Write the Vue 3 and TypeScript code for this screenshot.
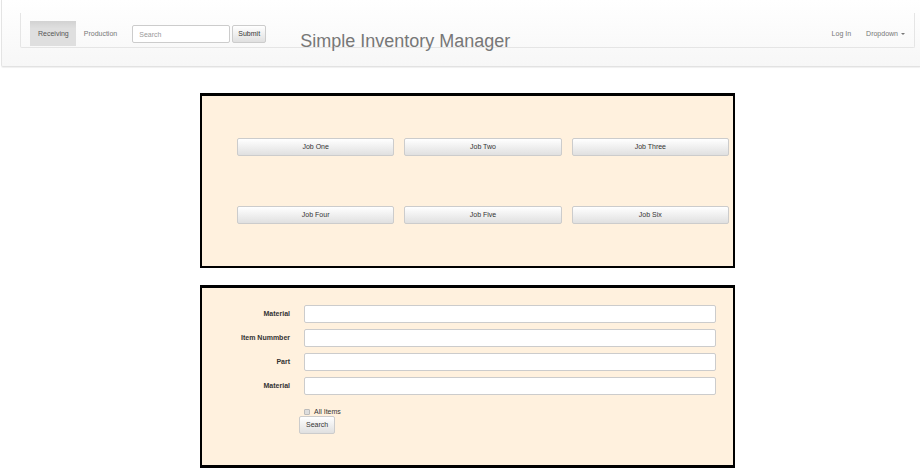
<script setup lang="ts">
import { ref } from 'vue'

interface Field {
  id: string
  label: string
}

const tabs = ['Receiving', 'Production']
const activeTab = ref('Receiving')
const query = ref('')
const allItems = ref(false)

const jobs = ['Job One', 'Job Two', 'Job Three', 'Job Four', 'Job Five', 'Job Six']

const fields: Field[] = [
  { id: 'material', label: 'Material' },
  { id: 'item-number', label: 'Item Nummber' },
  { id: 'part', label: 'Part' },
  { id: 'material-type', label: 'Material' },
]
const values = ref<Record<string, string>>({})
</script>

<template>
  <div class="page">
    <header class="header">
      <nav class="navbar">
        <a
          v-for="tab in tabs"
          :key="tab"
          href="#"
          class="tab"
          :class="{ active: tab === activeTab }"
          @click.prevent="activeTab = tab"
        >{{ tab }}</a>
        <form class="search" @submit.prevent>
          <input v-model="query" class="field" type="text" placeholder="Search" aria-label="Search" />
          <button class="btn" type="submit">Submit</button>
        </form>
        <h1 class="title">Simple Inventory Manager</h1>
        <a href="#" class="tab login">Log In</a>
        <a href="#" class="tab dropdown">Dropdown<span class="caret"></span></a>
      </nav>
    </header>

    <main class="content">
      <section class="panel jobs">
        <button v-for="job in jobs" :key="job" class="btn" type="button">{{ job }}</button>
      </section>

      <form class="panel lookup" @submit.prevent>
        <div v-for="field in fields" :key="field.id" class="row">
          <label :for="field.id">{{ field.label }}</label>
          <input :id="field.id" v-model="values[field.id]" class="field" type="text" />
        </div>
        <label class="check">
          <input v-model="allItems" type="checkbox" />
          <span>All Items</span>
        </label>
        <button class="btn submit" type="submit">Search</button>
      </form>
    </main>
  </div>
</template>

<style>
body {
  background: #fff;
}
</style>

<style scoped>
.page {
  font-family: "Liberation Sans", Arial, sans-serif;
  font-size: 7px;
  line-height: 10px;
  color: #333;
}

.page * {
  box-sizing: border-box;
}

.header {
  margin-left: 1px;
  padding: 13px 5px 18px 18px;
  border-left: 1px solid #e4e4e4;
  border-bottom: 1px solid #e2e2e2;
  border-bottom-left-radius: 2px;
  background: linear-gradient(#fff, #f7f7f7);
  box-shadow: 0 1px 1px #f0f0f0;
}

.navbar {
  display: flex;
  align-items: flex-start;
  height: 35px;
  padding: 8px 2px 0 9px;
  border: 1px solid #e5e5e5;
  border-top: 0;
  border-radius: 0 0 2px 2px;
}

.tab {
  padding: 8px 7px 7px 8px;
  color: #777;
  text-decoration: none;
  white-space: nowrap;
}

.tab.active {
  color: #555;
  background: linear-gradient(#d2d2d2, #dfdfdf 30%);
}

.search {
  display: flex;
  gap: 2px;
  margin: 4px 0 0 8px;
}

.field {
  height: 18px;
  padding: 0 6px;
  border: 1px solid #ccc;
  border-radius: 2px;
  background: #fff;
  color: #555;
  font: inherit;
}

.field::placeholder {
  color: #999;
  opacity: 1;
}

.search .field {
  width: 98px;
}

.btn {
  height: 18px;
  padding: 0 6px;
  border: 1px solid #ccc;
  border-radius: 2px;
  background: linear-gradient(#fff, #e0e0e0);
  color: #333;
  font: inherit;
}

.search .btn {
  width: 34px;
  padding: 0;
}

.title {
  margin: 2px 0 0 34px;
  color: #777;
  font-size: 18px;
  line-height: 36px;
  font-weight: 400;
  white-space: nowrap;
}

.login {
  margin-left: auto;
}

.dropdown {
  display: flex;
  align-items: center;
}

.caret {
  margin-left: 3px;
  border: 2px solid transparent;
  border-top-color: #777;
  border-bottom: 0;
}

.content {
  display: flex;
  flex-direction: column;
  gap: 17px;
  margin: 26px 185px 0 200px;
}

.panel {
  border: 2px solid #000;
  border-top-width: 3px;
  background: #fff1de;
}

.jobs {
  display: grid;
  grid-template-columns: repeat(3, 1fr);
  gap: 50px 10px;
  padding: 42px 4px 42px 35px;
}

.lookup {
  display: flex;
  flex-direction: column;
  gap: 6px;
  padding: 17px 17px 31px 0;
  border-bottom-width: 3px;
}

.row {
  display: flex;
  align-items: center;
  gap: 14px;
}

.row label {
  width: 88px;
  font-weight: 700;
  text-align: right;
}

.row .field {
  flex: 1;
}

.check {
  display: flex;
  align-items: center;
  align-self: flex-start;
  gap: 4px;
  margin: 6px 0 0 102px;
}

.check input {
  width: 6px;
  height: 6px;
  margin: 0;
  border: 1px solid #bbb;
  border-radius: 1px;
  background: #ddd;
  appearance: none;
}

.check input:checked {
  background: #555;
}

.submit {
  align-self: flex-start;
  width: 36px;
  margin: -7px 0 0 97px;
}
</style>
